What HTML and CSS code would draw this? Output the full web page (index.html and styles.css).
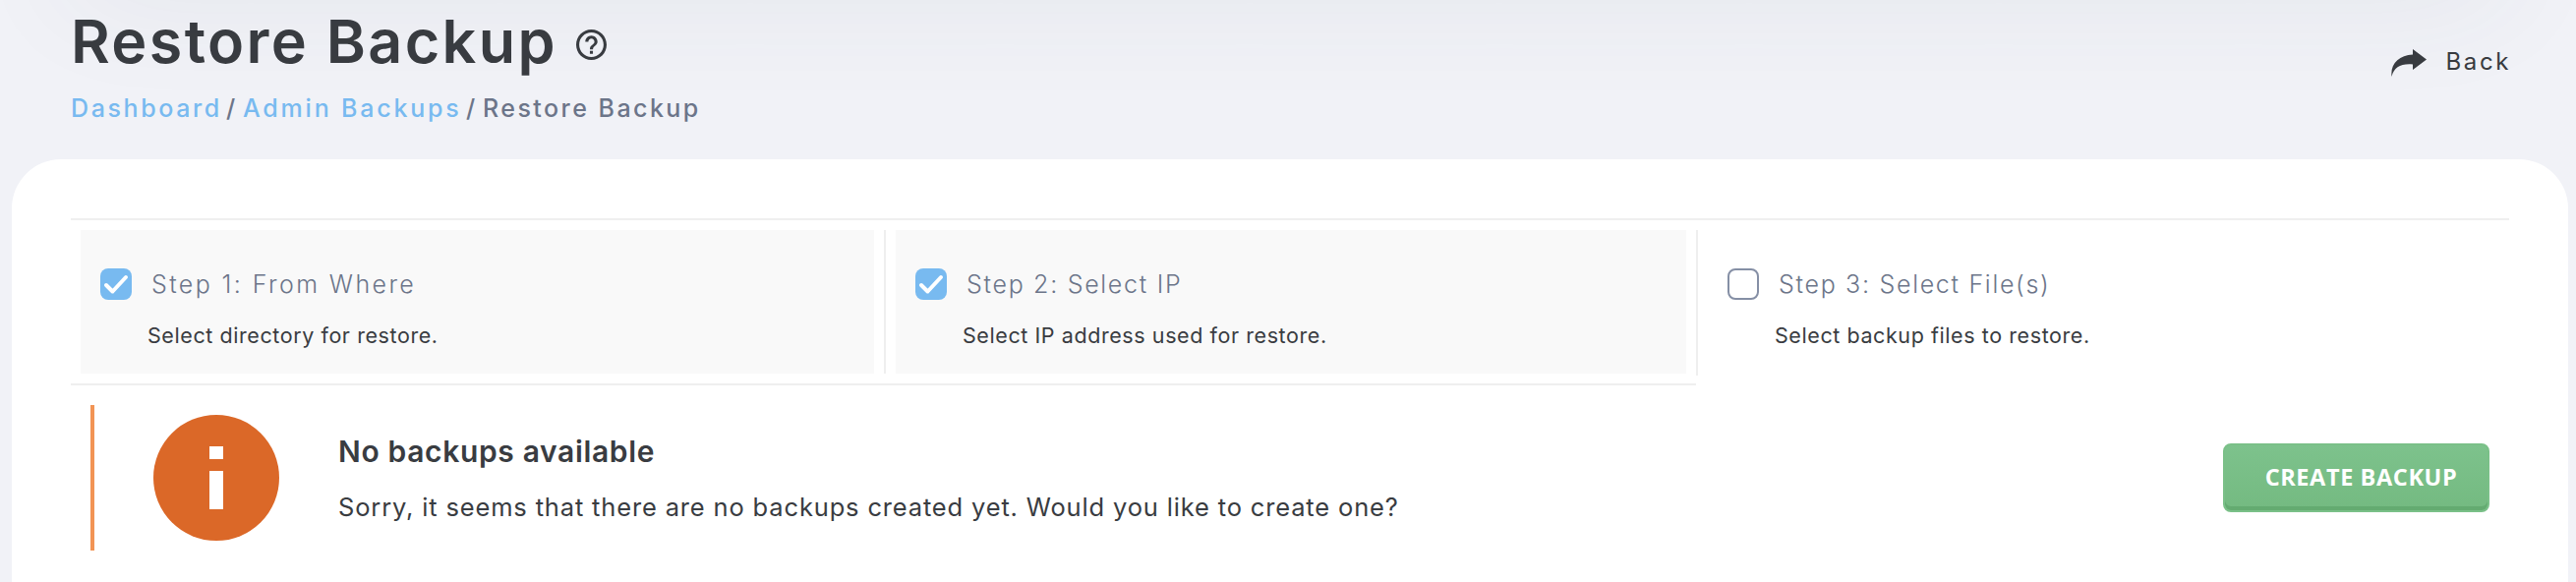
FILE: index.html
```
<!DOCTYPE html>
<html lang="en">
<head>
    <meta charset="UTF-8">
    <meta name="viewport" content="width=device-width, initial-scale=1.0">
    <title>Restore Backup</title>
    <link rel="stylesheet" href="styles.css">
</head>
<body>
    <!-- Page header -->
    <header class="page-header">
        <div class="heading">
            <div class="title-row">
                <h1>Restore Backup</h1>
                <svg class="help-icon" viewBox="2 2 20 20"><path d="M11 18h2v-2h-2v2zm1-16C6.48 2 2 6.48 2 12s4.48 10 10 10 10-4.48 10-10S17.52 2 12 2zm0 18c-4.41 0-8-3.59-8-8s3.59-8 8-8 8 3.59 8 8-3.59 8-8 8zm0-14c-2.21 0-4 1.79-4 4h2c0-1.1.9-2 2-2s2 .9 2 2c0 2-3 1.75-3 5h2c0-2.25 3-2.5 3-5 0-2.21-1.79-4-4-4z"/></svg>
            </div>
            <nav class="breadcrumb">
                <a class="crumb-dashboard" href="#">Dashboard</a>
                <span class="slash">/</span>
                <a class="crumb-backups" href="#">Admin Backups</a>
                <span class="slash">/</span>
                <span class="crumb-current">Restore Backup</span>
            </nav>
        </div>
        <a class="back" href="#">
            <svg class="back-icon" viewBox="0 0 36 28"><path d="M22 0L36 10.500L22 21V15.500C10 14.500 3 18 .5 28C-1 15 8 6 22 5.500Z"/></svg>
            <span>Back</span>
        </a>
    </header>

    <main class="panel">
        <!-- Steps -->
        <div class="steps">
            <div class="step first">
                <div class="step-body done">
                    <span class="checkbox checked"><svg viewBox="0 0 32 32"><path d="M6 17l6.500 6.500L26 9"/></svg></span>
                    <div class="step-text">
                        <h2>Step 1: From Where</h2>
                        <p>Select directory for restore.</p>
                    </div>
                </div>
            </div>
            <div class="step second">
                <div class="step-body done">
                    <span class="checkbox checked"><svg viewBox="0 0 32 32"><path d="M6 17l6.500 6.500L26 9"/></svg></span>
                    <div class="step-text">
                        <h2>Step 2: Select IP</h2>
                        <p>Select IP address used for restore.</p>
                    </div>
                </div>
            </div>
            <div class="step current">
                <div class="step-body">
                    <span class="checkbox"></span>
                    <div class="step-text">
                        <h2>Step 3: Select File(s)</h2>
                        <p>Select backup files to restore.</p>
                    </div>
                </div>
            </div>
        </div>

        <!-- Empty state -->
        <div class="notice">
            <svg class="info-icon" viewBox="0 0 128 128">
                <circle cx="64" cy="64" r="64"/>
                <path d="M57 32h14v13H57zM57 57h14v39H57z"/>
            </svg>
            <div class="notice-text">
                <h3>No backups available</h3>
                <p>Sorry, it seems that there are no backups created yet. Would you like to create one?</p>
            </div>
            <button class="button">CREATE BACKUP</button>
        </div>
    </main>
</body>
</html>
```
FILE: styles.css
```
* { box-sizing: border-box; }
body {
    margin: 0;
    background: #f1f2f7;
    color: #393c41;
    font-family: Inter, "Open Sans", sans-serif;
}
h1, h2, h3, p { margin: 0; }
a { text-decoration: none; }

.page-header {
    position: relative;
    display: flex;
    justify-content: space-between;
    height: 162px;
    padding: 12px 66px 0 72px;
}
/* soft shadow coming from above the page */
.page-header::before {
    content: "";
    position: absolute;
    top: -100px;
    left: 72px;
    right: 72px;
    height: 100px;
    box-shadow: 0 0 120px rgba(60, 65, 80, 0.07);
}
.title-row {
    display: flex;
    height: 60px;
}
h1 {
    width: 514px;
    font-size: 61px;
    font-weight: 600;
    line-height: 60px;
    letter-spacing: 2.35px;
    white-space: nowrap;
}
.help-icon {
    width: 31px;
    height: 31px;
    margin-top: 18px;
    fill: #393c41;
}
.breadcrumb {
    display: flex;
    margin-top: 23px;
    color: #6c7589;
    font-size: 25px;
    font-weight: 500;
    line-height: 30px;
    white-space: nowrap;
}
.breadcrumb a { color: #78baf0; }
.crumb-dashboard {
    width: 158px;
    letter-spacing: 2.6px;
}
.crumb-backups {
    width: 227px;
    letter-spacing: 2.8px;
}
.crumb-current { letter-spacing: 2.45px; }
.slash { width: 17px; }
.back {
    display: flex;
    gap: 20px;
    margin-top: 36px;
    height: 30px;
    color: #393c41;
    font-size: 24px;
    line-height: 30px;
    letter-spacing: 2.6px;
}
.back-icon {
    width: 36px;
    height: 28px;
    margin-top: 2px;
    fill: #393c41;
}

.panel {
    height: 430px;
    margin: 0 8px 0 12px;
    padding: 60px 60px 0;
    background: #fff;
    border-radius: 50px 50px 0 0;
}
.steps {
    display: grid;
    grid-template-columns: 827px 826px 1fr;
    height: 170px;
    border-top: 2px solid #efefef;
}
.step {
    padding: 10px;
    border-bottom: 2px solid #efefef;
}
.step.second { padding-left: 0; }
.step.current {
    padding-left: 0;
    border-bottom: none;
}
.step-body {
    display: flex;
    height: 146px;
    padding: 39px 20px 0;
}
.step-body.done { background: #f9f9f9; }
.second .step-body {
    border-left: 2px solid #efefef;
    padding-left: 30px;
    background: linear-gradient(90deg, #fff 10px, #f9f9f9 10px);
}
.current .step-body {
    height: 148px;
    padding-left: 30px;
    border-left: 2px solid #efefef;
}
.checkbox {
    width: 32px;
    height: 32px;
    border: 2px solid #858fa5;
    border-radius: 8px;
}
.checkbox.checked {
    border: none;
    background: #78baf0;
}
.checkbox svg {
    display: block;
    fill: none;
    stroke: #fff;
    stroke-width: 4;
    stroke-linecap: round;
    stroke-linejoin: round;
}
.step-text { margin-left: 20px; }
.step-text h2 {
    color: #6c7589;
    font-size: 25px;
    font-weight: 300;
    line-height: 32px;
    letter-spacing: 1.7px;
}
.first h2 { letter-spacing: 2.4px; }
.step-text p {
    margin: 21px 0 0 -4px;
    font-size: 21.500px;
    line-height: 30px;
    letter-spacing: 0.58px;
}

.notice {
    display: flex;
    align-items: flex-start;
    height: 148px;
    margin: 20px 20px 0;
    padding: 10px 0 0 60px;
    border-left: 4px solid #f29455;
}
.info-icon {
    width: 128px;
    height: 128px;
    fill: #db6828;
}
.info-icon path { fill: #fff; }
.notice-text {
    flex: 1;
    padding: 19px 0 0 60px;
}
.notice h3 {
    font-size: 30px;
    font-weight: 600;
    line-height: 36px;
    letter-spacing: 0.65px;
}
.notice p {
    margin-top: 23px;
    font-size: 25.500px;
    line-height: 32px;
    letter-spacing: 0.84px;
}
.button {
    width: 271px;
    height: 70px;
    margin-top: 29px;
    padding: 0 0 2px 10px;
    border: 2px solid #7ac088;
    border-radius: 8px;
    background: linear-gradient(#7dc28c, #74ba81);
    box-shadow: inset 0 -4px 0 #64ab71;
    color: #fff;
    font-family: "Open Sans", sans-serif;
    font-size: 23.500px;
    font-weight: 700;
    letter-spacing: 0.6px;
    cursor: pointer;
}
```
